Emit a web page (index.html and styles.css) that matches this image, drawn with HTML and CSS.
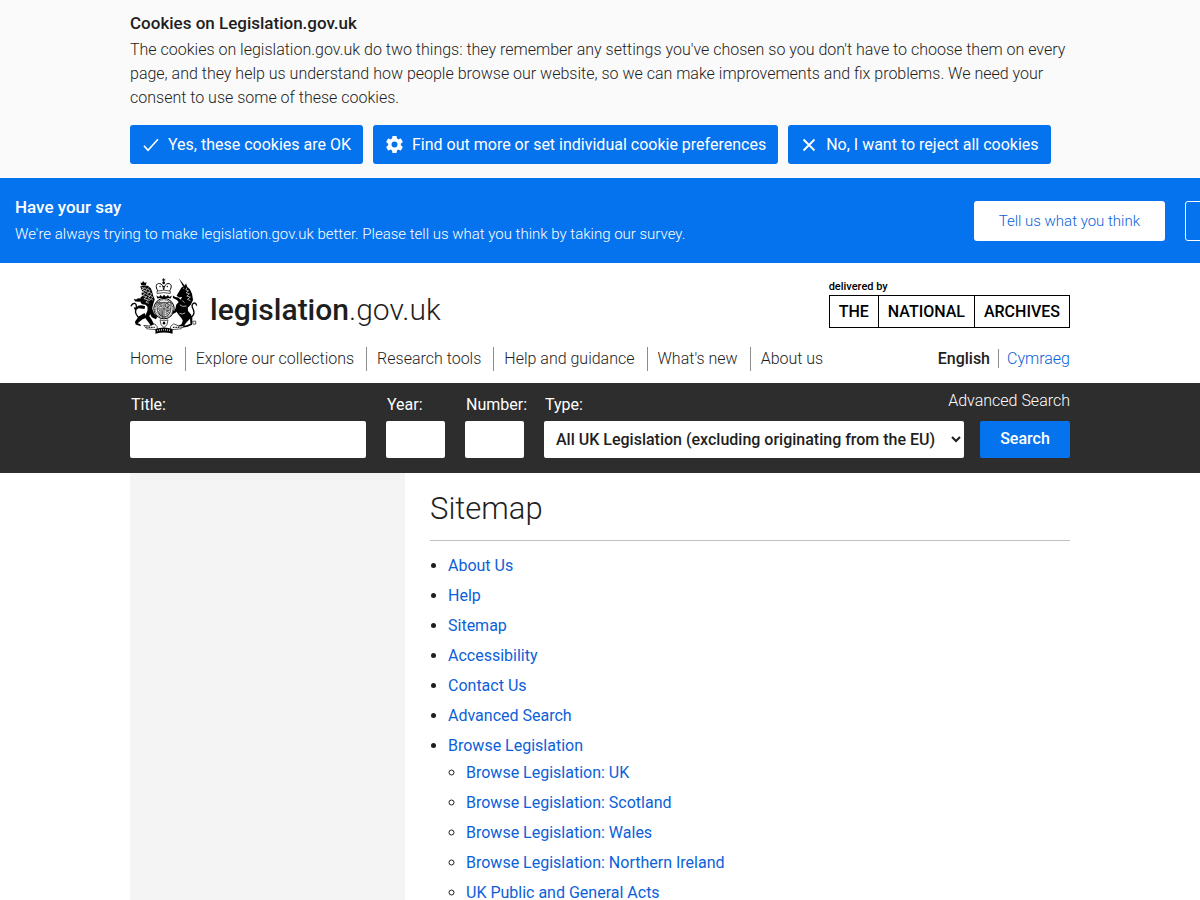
FILE: index.html
```html
<!DOCTYPE html>
<html lang="en">
<head>
    <meta charset="UTF-8">
    <meta name="viewport" content="width=device-width, initial-scale=1.0">
    <title>Sitemap - Legislation.gov.uk</title>
    <link rel="stylesheet" href="styles.css">
</head>
<body>
    <section class="cookies">
        <div class="container">
            <h2>Cookies on Legislation.gov.uk</h2>
            <p>The cookies on legislation.gov.uk do two things: they remember any settings you've chosen so you don't have to choose them on every page, and they help us understand how people browse our website, so we can make improvements and fix problems. We need your consent to use some of these cookies.</p>
            <div class="cookie-buttons">
                <button type="button">
                    <svg width="16" height="16" viewBox="0 0 16 16"><path d="M1 8.800 5 13.200 15 2.200" fill="none" stroke="#fff" stroke-width="1.600"/></svg>
                    Yes, these cookies are OK
                </button>
                <button type="button">
                    <svg width="17" height="17" viewBox="2 2 20 20"><path fill="#fff" d="M19.430 12.980c.04-.32.07-.64.07-.98s-.03-.66-.07-.98l2.110-1.650c.19-.15.24-.42.12-.64l-2-3.460c-.12-.22-.39-.3-.61-.22l-2.490 1c-.52-.4-1.080-.73-1.690-.98l-.38-2.650C14.460 2.180 14.250 2 14 2h-4c-.25 0-.46.18-.49.42l-.38 2.650c-.61.25-1.170.59-1.690.98l-2.490-1c-.23-.09-.49 0-.61.22l-2 3.460c-.13.22-.07.49.12.64l2.110 1.650c-.04.32-.07.65-.07.98s.03.66.07.98l-2.110 1.650c-.19.15-.24.42-.12.64l2 3.460c.12.22.39.3.61.22l2.490-1c.52.4 1.080.73 1.690.98l.38 2.650c.03.24.24.42.49.42h4c.25 0 .46-.18.49-.42l.38-2.650c.61-.25 1.170-.59 1.690-.98l2.490 1c.23.09.49 0 .61-.22l2-3.460c.12-.22.07-.49-.12-.64l-2.110-1.650zM12 15.500a3.500 3.500 0 1 1 0-7 3.500 3.500 0 0 1 0 7z"/></svg>
                    Find out more or set individual cookie preferences
                </button>
                <button type="button">
                    <svg width="16" height="16" viewBox="0 0 16 16"><path d="M2.500 2.500 13.500 13.500M13.500 2.500 2.500 13.500" fill="none" stroke="#fff" stroke-width="1.800"/></svg>
                    No, I want to reject all cookies
                </button>
            </div>
        </div>
    </section>

    <section class="survey">
        <div class="survey-text">
            <h2>Have your say</h2>
            <p>We're always trying to make legislation.gov.uk better. Please tell us what you think by taking our survey.</p>
        </div>
        <a class="survey-link" href="#">Tell us what you think</a>
        <button class="survey-close" type="button" aria-label="Close"></button>
    </section>

    <header class="container">
        <div class="brand-row">
            <a class="brand" href="#">
                <svg class="crest" width="68" height="58" viewBox="30 18 206 174">
                    <!-- crown -->
                    <g fill="none" stroke="#000" stroke-width="3">
                        <path d="M114 59c-7-12-6-23 6-22 7 1 10 7 12 19 2-12 6-18 13-19 11-1 13 10 5 22"/>
                        <path d="M132 21v14M127 26h10"/>
                        <path d="M112 60q20-6 40 0v7q-20-5-40 0z" stroke-width="2"/>
                    </g>
                    <g fill="#000"><circle cx="132" cy="35" r="4"/><circle cx="121" cy="46" r="2"/><circle cx="132" cy="46" r="2"/><circle cx="143" cy="46" r="2"/></g>
                    <!-- mantling -->
                    <path d="M110 73l8 5 4-6 6 5 5-6 6 6 6-5 4 6 8-5-4 9-10-1-10 3-10-3-10 1z" fill="#000"/>
                    <!-- shield inside the garter -->
                    <circle cx="133" cy="113" r="31" fill="#fff" stroke="#000" stroke-width="3"/>
                    <circle cx="133" cy="113" r="27" fill="none" stroke="#555" stroke-width="4" stroke-dasharray="3 2"/>
                    <path d="M112 94h42v21q-1 17-21 24-20-7-21-24z" fill="#ddd" stroke="#000" stroke-width="2"/>
                    <path d="M133 94v45M112 114h42" stroke="#000" stroke-width="2"/>
                    <g fill="none" stroke="#000" stroke-width="2">
                        <path d="M115 98h14M115 103l5-2 9 3M116 109l7-3 6 3M138 98l7-1 5 6-5 7-7-2zM145 99v12"/>
                        <path d="M121 117l-4 5 4 11M124 117v19M128 118v18M138 119h12M138 124l5-2 7 3M138 130l7-2"/>
                    </g>
                    <!-- lion -->
                    <g fill="#000">
                        <path d="M64 42l-2-9 4 2 4-6 5 6 5-3-2 10z"/>
                        <path d="M61 46l10-3 13 1 9 7 4 10 3 12 5 12-4 12-3 12-2 16-8 10 8 12 6 12 7 3-2 6-13-2-9-13-8-10 1-12 5-12 0-12-6-6-10-1-5-5 3-5-4-5 2-8 4-1-2-8 2-8z"/>
                        <path d="M67 84q-12-6-18 1l-8-1 5 7 16 1 10 5zM76 106q-20-8-27 4l-8-1 4 9 12-6 17 2zM74 126l-18 11-11 16 2 8 16 5-2-6-8-3 14-11 14-6zM96 110l7 18 10 10-5 7-12-6-8-16z"/>
                    </g>
                    <path d="M60 143Q43 130 48 115q4-16-4-18-7-1-11 9" fill="none" stroke="#000" stroke-width="4"/>
                    <g fill="none" stroke="#fff" stroke-width="2">
                        <path d="M65 48l7 3-6 4 9 3-9 5 11 4-10 6 14 4-9 6 14 4-8 6 9 4"/>
                        <path d="M78 46l-5 5 9 4-6 5 11 5-7 5 11 5-7 5 9 5-7 5"/>
                        <path d="M86 49l-3 5 8 4-4 5 9 5-5 5 8 5-5 5 6 5"/>
                    </g>
                    <!-- unicorn -->
                    <g fill="#000">
                        <path d="M178 21l18 23-5 3z"/>
                        <path d="M186 49l9-5 5-7 3 9 9 9 6 14 3 18-7 14-9 9 1 10 10 12-2 9-13 14-10 13-15 5-3-2 3-6 10-5 4-10-4-8-10-12-9-14 3-15 12-13 6-10-9 1-8-5z"/>
                        <path d="M190 91l-14-12-9-1-7-5 0 8 12 6 12 14zM184 108l-13 2-8 10-5 1 1 8 10-4 7-8 14 3zM198 134l14 10 1 15-14 5-8-1-3 8 17-3 13-6 1-22-16-14z"/>
                    </g>
                    <path d="M202 143q28-6 20-27-8-14 0-19 7-4 10 7" fill="none" stroke="#000" stroke-width="4"/>
                    <g fill="none" stroke="#fff" stroke-width="2">
                        <path d="M203 49l-4 7 8 3-7 6 10 3-8 7 11 3-9 7 9 4M191 51l3 1"/>
                        <path d="M181 101l8 5 12-1M180 127q9 5 17-1M188 88l7 7"/>
                    </g>
                    <path d="M220 151h9v9h-8z" fill="none" stroke="#000" stroke-width="2"/>
                    <!-- motto ribbon -->
                    <path d="M72 164q17 5 32-5l8 8 1 10-13-1-19-2zM194 164q-17 5-32-5l-9 8-1 10 13-1 20-2z" fill="#fff" stroke="#000" stroke-width="2"/>
                    <path d="M78 169l27 1M160 170l27-1" stroke="#000" stroke-width="4" stroke-dasharray="3 2"/>
                    <path d="M107 175q26-10 52 0v14q-26-7-52 0z" fill="#000"/>
                    <path d="M113 180q20-6 40 0" fill="none" stroke="#fff" stroke-width="5" stroke-dasharray="2 4"/>
                    <path d="M121 147q12 6 24 0l-3 15-9 8-9-8z" fill="#fff" stroke="#000" stroke-width="2"/>
                    <circle cx="133" cy="157" r="4" fill="#000"/>
                </svg>
                <span class="brand-name"><strong>legislation</strong>.gov.uk</span>
            </a>
            <a class="archives" href="#">
                <span class="delivered">delivered by</span>
                <span class="archives-box"><span>THE</span><span>NATIONAL</span><span>ARCHIVES</span></span>
            </a>
        </div>
        <div class="nav-row">
            <nav>
                <ul class="nav">
                    <li><a href="#">Home</a></li>
                    <li><a href="#">Explore our collections</a></li>
                    <li><a href="#">Research tools</a></li>
                    <li><a href="#">Help and guidance</a></li>
                    <li><a href="#">What's new</a></li>
                    <li><a href="#">About us</a></li>
                </ul>
            </nav>
            <div class="language"><strong>English</strong><a href="#">Cymraeg</a></div>
        </div>
    </header>

    <div class="search">
        <form class="container search-form">
            <div class="field field-title">
                <label for="title">Title:</label>
                <input type="text" id="title">
            </div>
            <div class="field field-short">
                <label for="year">Year:</label>
                <input type="text" id="year">
            </div>
            <div class="field field-short">
                <label for="number">Number:</label>
                <input type="text" id="number">
            </div>
            <div class="field field-type">
                <label for="type">Type:</label>
                <select id="type">
                    <option>All UK Legislation (excluding originating from the EU)</option>
                </select>
            </div>
            <div class="search-actions">
                <a href="#">Advanced Search</a>
                <button type="submit">Search</button>
            </div>
        </form>
    </div>

    <div class="container layout">
        <aside class="sidebar"></aside>
        <main class="content">
            <h1>Sitemap</h1>
            <ul class="sitemap">
                <li><a href="#">About Us</a></li>
                <li><a href="#">Help</a></li>
                <li><a href="#">Sitemap</a></li>
                <li><a href="#">Accessibility</a></li>
                <li><a href="#">Contact Us</a></li>
                <li><a href="#">Advanced Search</a></li>
                <li><a href="#">Browse Legislation</a>
                    <ul>
                        <li><a href="#">Browse Legislation: UK</a></li>
                        <li><a href="#">Browse Legislation: Scotland</a></li>
                        <li><a href="#">Browse Legislation: Wales</a></li>
                        <li><a href="#">Browse Legislation: Northern Ireland</a></li>
                        <li><a href="#">UK Public and General Acts</a></li>
                    </ul>
                </li>
            </ul>
        </main>
    </div>
</body>
</html>
```
FILE: styles.css
```css
* {
    box-sizing: border-box;
}
body {
    margin: 0;
    font-family: Roboto, Arial, sans-serif;
    font-size: 16px;
    font-weight: 300;
    line-height: 24px;
    color: #1e1e1e;
    background-color: #fff;
    overflow-x: hidden;
}
h1, h2, p, ul {
    margin: 0;
    padding: 0;
}
h2 {
    font-size: 17px;
    font-weight: 500;
}
.survey h2 {
    font-size: 17px;
}
a {
    color: #0b61d9;
    text-decoration: none;
}
a:hover {
    text-decoration: underline;
}
button, input, select {
    font-family: inherit;
    font-size: 16px;
    border: none;
    border-radius: 2px;
}
button {
    background-color: #0573ee;
    color: #fff;
    cursor: pointer;
}
.container {
    max-width: 940px;
    margin: 0 auto;
}
.cookies {
    padding: 11px 0 14px;
    background-color: #fafafa;
}
.cookies p {
    margin: 3px 0 15px;
}
.cookie-buttons {
    display: flex;
    gap: 10px;
}
.cookie-buttons button {
    display: flex;
    align-items: center;
    gap: 9px;
    height: 39px;
    padding: 0 12px 0 13px;
    border-radius: 3px;
}
.survey {
    display: flex;
    align-items: center;
    gap: 20px;
    padding: 17px 0 17px 15px;
    background-color: #0573ee;
    color: #fff;
    margin-right: -25px;
}
.survey-text {
    flex: 1;
    font-size: 15px;
}
.survey-text p {
    margin-top: 3px;
}
.survey-link {
    padding: 8px 25px;
    border-radius: 3px;
    background-color: #fff;
    font-size: 15px;
}
.survey-close {
    width: 40px;
    height: 40px;
    border: 1px solid #fff;
    border-radius: 3px;
}
.brand-row {
    display: flex;
    justify-content: space-between;
    padding-top: 14px;
}
.brand {
    display: flex;
    gap: 12px;
    color: #1e1e1e;
}
.brand-name {
    padding-top: 14px;
    font-size: 30px;
    line-height: 38px;
}
.brand-name strong {
    font-weight: 500;
}
.archives {
    padding-top: 1px;
    color: #000;
    font-weight: 500;
}
.delivered {
    display: block;
    font-size: 11px;
    line-height: 17px;
}
.archives-box {
    display: flex;
    height: 33px;
    border: 1px solid #000;
    font-size: 16px;
    line-height: 32px;
}
.archives-box span {
    padding: 0 9px;
}
.archives-box span + span {
    border-left: 1px solid #000;
}
.nav-row {
    display: flex;
    justify-content: space-between;
    padding: 12px 0;
}
.nav {
    display: flex;
    list-style: none;
}
.nav li + li {
    margin-left: 12px;
    padding-left: 10px;
    border-left: 1px solid #8c8c8c;
}
.nav a {
    color: #1e1e1e;
}
.language {
    padding-top: 2px;
    line-height: 19px;
}
.language strong {
    font-weight: 500;
}
.language a {
    display: inline-block;
    margin-left: 8px;
    padding-left: 8px;
    border-left: 1px solid #8c8c8c;
}
.search {
    padding: 6px 0 15px;
    background-color: #2d2d2d;
    color: #fff;
}
.search-form {
    display: flex;
    align-items: flex-end;
    gap: 20px;
}
.field label {
    display: block;
    margin-bottom: 4px;
    padding-left: 1px;
    font-weight: 400;
    white-space: nowrap;
}
.field input, .field select {
    display: block;
    width: 100%;
    height: 37px;
    background-color: #fff;
    color: #1e1e1e;
}
.field select {
    padding: 0 0 0 8px;
    font-weight: 500;
}
.field-title {
    flex: 1;
}
.field-short {
    width: 59px;
}
.field-type {
    width: 420px;
}
.search-actions {
    display: flex;
    flex-direction: column;
    align-items: flex-end;
    gap: 8px;
    width: 90px;
    margin-left: -4px;
    white-space: nowrap;
}
.search-actions a {
    color: #fff;
}
.search-actions button {
    width: 100%;
    height: 37px;
    padding: 0 0 2px;
    font-weight: 500;
}
.layout {
    display: flex;
    gap: 25px;
}
.sidebar {
    width: 275px;
    background-color: #f4f4f4;
}
.content {
    flex: 1;
}
h1 {
    padding: 16px 0 11px;
    border-bottom: 1px solid #c1c1c1;
    font-size: 31px;
    font-weight: 300;
    line-height: 40px;
}
.sitemap {
    padding: 13px 0 0 18px;
    font-weight: 400;
}
.sitemap li {
    margin-bottom: 6px;
}
.sitemap ul {
    margin-top: 3px;
    padding-left: 18px;
}
```
